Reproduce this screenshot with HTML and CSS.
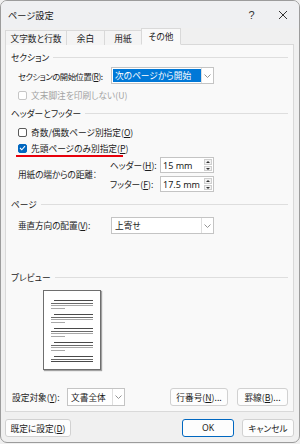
FILE: index.html
```html
<!DOCTYPE html>
<html>

<head>
    <meta charset="UTF-8">
    <title>ページ設定</title>
    <link rel="stylesheet" href="styles.css">
</head>

<body>

    <div class="window">
        <div class="titlebar">
            <span class="title">ページ設定</span>
            <span class="help">?</span>
            <span class="close">
                <svg width="10" height="10" viewBox="0 0 10 10"><path d="M1 1L9 9M9 1L1 9" stroke="#333" stroke-width="1"/></svg>
            </span>
        </div>

        <div class="tabs">
            <div class="tab t-chars">文字数と行数</div>
            <div class="tab t-margin">余白</div>
            <div class="tab t-paper">用紙</div>
            <div class="tab t-other active">その他</div>
        </div>

        <div class="panel">
            <div class="group-title g-section"><span>セクション</span></div>
            <div class="row r-start">
                <span class="lbl lbl-tight">セクションの開始位置(<u>R</u>):</span>
                <div class="select s-wide">
                    <span class="value"><span class="hl">次のページから開始</span></span>
                    <span class="arrow"><svg width="7" height="4" viewBox="0 0 7 4"><path d="M0.5 0.5L3.5 3.5L6.5 0.5" fill="none" stroke="#888" stroke-width="0.9"/></svg></span>
                </div>
            </div>
            <div class="check c-endnote disabled">
                <span class="box"></span>
                <span>文末脚注を印刷しない(U)</span>
            </div>

            <div class="group-title g-header"><span>ヘッダーとフッター</span></div>
            <div class="check c-oddeven">
                <span class="box"></span>
                <span>奇数/偶数ページ別指定(<u>O</u>)</span>
            </div>
            <div class="check c-first checked marked">
                <span class="box"><svg width="7" height="6" viewBox="0 0 7 6"><path d="M1 3L2.8 4.8L6 1.2" fill="none" stroke="#fff" stroke-width="1.1"/></svg></span>
                <span>先頭ページのみ別指定(<u>P</u>)</span>
            </div>

            <div class="distance">
                <span class="lbl d-lbl">用紙の端からの距離：</span>
                <span class="spin-lbl">ヘッダー(<u>H</u>):</span>
                <div class="spin">
                    <span class="value">15 mm</span>
                    <span class="spin-btns"><span class="up"></span><span class="down"></span></span>
                </div>
                <span class="spin-lbl">フッター(<u>F</u>):</span>
                <div class="spin">
                    <span class="value">17.5 mm</span>
                    <span class="spin-btns"><span class="up"></span><span class="down"></span></span>
                </div>
            </div>

            <div class="group-title g-page"><span>ページ</span></div>
            <div class="row r-valign">
                <span class="lbl">垂直方向の配置(<u>V</u>):</span>
                <div class="select s-wide">
                    <span class="value">上寄せ</span>
                    <span class="arrow"><svg width="7" height="4" viewBox="0 0 7 4"><path d="M0.5 0.5L3.5 3.5L6.5 0.5" fill="none" stroke="#888" stroke-width="0.9"/></svg></span>
                </div>
            </div>

            <div class="group-title g-preview"><span>プレビュー</span></div>
            <div class="preview-page">
                <svg width="56" height="78" viewBox="0 0 56 78">
                    <g shape-rendering="crispEdges">
                        <!-- 段落 1 -->
                        <rect x="10" y="9" width="39" height="1" fill="#4a4a4a"/>
                        <rect x="7" y="12" width="42" height="1" fill="#6a6a6a"/>
                        <rect x="7" y="14" width="42" height="1" fill="#a8a8a8"/>
                        <rect x="7" y="17" width="14" height="1" fill="#a8a8a8"/>
                        <!-- 段落 2 -->
                        <rect x="10" y="23" width="39" height="1" fill="#4a4a4a"/>
                        <rect x="7" y="26" width="42" height="1" fill="#6a6a6a"/>
                        <rect x="7" y="28" width="42" height="1" fill="#a8a8a8"/>
                        <rect x="7" y="31" width="14" height="1" fill="#a8a8a8"/>
                        <!-- 段落 3 -->
                        <rect x="10" y="37" width="39" height="1" fill="#4a4a4a"/>
                        <rect x="7" y="40" width="42" height="1" fill="#6a6a6a"/>
                        <rect x="7" y="42" width="42" height="1" fill="#a8a8a8"/>
                        <rect x="7" y="45" width="14" height="1" fill="#a8a8a8"/>
                        <!-- 段落 4 -->
                        <rect x="10" y="51" width="39" height="1" fill="#4a4a4a"/>
                        <rect x="7" y="54" width="42" height="1" fill="#6a6a6a"/>
                        <rect x="7" y="56" width="42" height="1" fill="#a8a8a8"/>
                        <rect x="7" y="59" width="14" height="1" fill="#a8a8a8"/>
                        <!-- 段落 5 -->
                        <rect x="10" y="65" width="39" height="1" fill="#4a4a4a"/>
                        <rect x="7" y="68" width="42" height="1" fill="#6a6a6a"/>
                        <rect x="7" y="70" width="42" height="1" fill="#4a4a4a"/>
                    </g>
                </svg>
            </div>

            <div class="bottom-row">
                <span class="apply-lbl">設定対象(<u>Y</u>):</span>
                <div class="select s-small">
                    <span class="value">文書全体</span>
                    <span class="arrow"><svg width="7" height="4" viewBox="0 0 7 4"><path d="M0.5 0.5L3.5 3.5L6.5 0.5" fill="none" stroke="#888" stroke-width="0.9"/></svg></span>
                </div>
                <span class="spacer"></span>
                <button class="btn b-lines">行番号(<u>N</u>)...</button>
                <button class="btn b-borders">罫線(<u>B</u>)...</button>
            </div>
        </div>

        <div class="footer">
            <button class="btn b-default">既定に設定(<u>D</u>)</button>
            <span class="spacer"></span>
            <button class="btn b-ok">OK</button>
            <button class="btn b-cancel">キャンセル</button>
        </div>
    </div>

</body>

</html>
```

FILE: styles.css
```css
/* ページ設定ダイアログ */

* {
    box-sizing: border-box;
}

html,
body {
    margin: 0;
    padding: 0;
}

body {
    width: 300px;
    height: 444px;
    overflow: hidden;
    background-color: #f0f0f0;
    font-family: "Noto Sans CJK JP", "Noto Sans", sans-serif;
    font-size: 8.7px;
    color: #1b1b1b;
    font-feature-settings: "palt";
}

u {
    text-underline-offset: 1px;
}

/* ウィンドウ枠 */
.window {
    width: 300px;
    height: 443px;
    border: 1px solid #9c9c9c;
    border-radius: 7px;
    background-color: #f0f0f0;
    display: flex;
    flex-direction: column;
    overflow: hidden;
}

/* タイトルバー */
.titlebar {
    height: 27px;
    flex: none;
    display: flex;
    align-items: center;
    padding-left: 7px;
    background-color: #eff0f2;
}

.title {
    flex: 1;
    font-size: 9.2px;
}

.help {
    width: 31px;
    text-align: center;
    font-family: "Liberation Sans", sans-serif;
    font-size: 11px;
    color: #333;
}

.close {
    width: 32px;
    display: flex;
    justify-content: center;
    align-items: center;
}

/* タブ */
.tabs {
    height: 17px;
    flex: none;
    display: flex;
    align-items: flex-end;
    padding-left: 4px;
    margin-bottom: -1px;
    position: relative;
    z-index: 1;
}

.tab {
    height: 15px;
    display: flex;
    align-items: center;
    justify-content: center;
    border: 1px solid #d9d9d9;
    border-bottom: none;
    margin-right: -1px;
    background-color: #f4f4f4;
}

.t-chars {
    width: 62px;
}

.t-margin {
    width: 39px;
}

.t-paper {
    width: 38px;
}

.t-other {
    width: 40px;
}

.tab.active {
    height: 17px;
    background-color: #f9f9f9;
    border-bottom: 1px solid #f9f9f9;
}

/* タブの中身 */
.panel {
    height: 368px;
    flex: none;
    margin: 0 5px 0 4px;
    padding: 0 5px;
    border: 1px solid #d9d9d9;
    background-color: #f9f9f9;
    display: flex;
    flex-direction: column;
}

.group-title {
    height: 12px;
    display: flex;
    align-items: center;
}

.group-title::after {
    content: "";
    flex: 1;
    height: 1px;
    margin-left: 4px;
    background-color: #dedede;
}

.g-section {
    margin-top: 6px;
}

.g-header {
    margin-top: 6px;
}

.g-page {
    margin-top: 6px;
}

.g-preview {
    margin-top: 37px;
}

.row {
    height: 17px;
    display: flex;
    align-items: center;
    padding-left: 7px;
}

.r-start {
    margin-top: 4px;
}

.r-valign {
    margin-top: 7px;
}

.lbl {
    width: 93px;
    flex: none;
    white-space: nowrap;
    letter-spacing: -0.15px;
}

.lbl-tight {
    font-size: 8.3px;
    letter-spacing: -0.45px;
}

/* ドロップダウン */
.select {
    height: 17px;
    display: flex;
    border: 1px solid #c4c4c4;
    background-color: #fff;
}

.s-wide {
    width: 103px;
}

.s-small {
    width: 58px;
}

.select .value {
    flex: 1;
    display: flex;
    align-items: center;
    padding-left: 3px;
    white-space: nowrap;
    overflow: hidden;
}

.hl {
    display: flex;
    align-items: center;
    height: 13px;
    width: 88px;
    margin-left: -2px;
    padding-left: 2px;
    background-color: #0078d7;
    color: #fff;
}

.select .arrow {
    width: 12px;
    flex: none;
    display: flex;
    align-items: center;
    justify-content: center;
    border-left: 1px solid #dedede;
}

/* チェックボックス */
.check {
    height: 12px;
    display: flex;
    align-items: center;
    gap: 4px;
    padding-left: 7px;
    position: relative;
}

.c-endnote {
    margin-top: 5px;
}

.c-oddeven {
    margin-top: 7px;
}

.c-first {
    margin-top: 4px;
}

.check .box {
    width: 9px;
    height: 9px;
    flex: none;
    border: 1px solid #5a5a5a;
    border-radius: 2px;
    background-color: #fff;
    display: flex;
    align-items: center;
    justify-content: center;
}

.check.disabled {
    color: #a3a3a3;
}

.check.disabled .box {
    border-color: #c6c6c6;
}

.check.checked .box {
    border-color: #0067c0;
    background-color: #0067c0;
}

/* 赤い下線 (注釈) */
.check.marked::after {
    content: "";
    position: absolute;
    left: 5px;
    top: 13px;
    width: 107px;
    height: 2px;
    background-color: #e8000b;
}

/* 用紙の端からの距離 */
.distance {
    margin-top: 3px;
    padding-left: 7px;
    display: grid;
    grid-template-columns: 92px 47px 54px;
    grid-template-rows: 16px 16px;
    row-gap: 3px;
    column-gap: 0;
    align-items: center;
}

.d-lbl {
    grid-row: 1 / 3;
    width: auto;
}

.spin-lbl {
    text-align: right;
    padding-right: 5px;
    white-space: nowrap;
}

.spin {
    height: 16px;
    display: flex;
    border: 1px solid #c4c4c4;
    background-color: #fff;
    margin-left: 3px;
    width: 54px;
}

.spin .value {
    flex: 1;
    display: flex;
    align-items: center;
    padding-left: 2px;
    font-family: "Noto Sans", sans-serif;
    font-size: 9px;
}

.spin-btns {
    width: 10px;
    flex: none;
    display: flex;
    flex-direction: column;
    gap: 1px;
    padding: 1px;
}

.spin-btns span {
    flex: 1;
    border: 1px solid #cfcfcf;
    background-color: #f2f2f2;
    position: relative;
}

.spin-btns .up::after,
.spin-btns .down::after {
    content: "";
    position: absolute;
    left: 1px;
    width: 0;
    height: 0;
    border-left: 2px solid transparent;
    border-right: 2px solid transparent;
}

.spin-btns .up::after {
    top: 1px;
    border-bottom: 2px solid #333;
}

.spin-btns .down::after {
    top: 1px;
    border-top: 2px solid #333;
}

/* プレビュー */
.preview-page {
    width: 58px;
    height: 80px;
    margin-top: 7px;
    margin-left: 32px;
    border: 1px solid #6e6e6e;
    background-color: #fff;
    box-shadow: 1px 1px 1px rgba(0, 0, 0, 0.35);
}

.preview-page svg {
    display: block;
}

/* 下の行 */
.bottom-row {
    height: 18px;
    margin-top: 18px;
    display: flex;
    align-items: center;
    padding-left: 1px;
}

.apply-lbl {
    width: 55px;
    flex: none;
    white-space: nowrap;
}

.bottom-row .select {
    height: 18px;
}

.spacer {
    flex: 1;
}

/* ボタン */
.btn {
    height: 18px;
    padding: 0;
    border: 1px solid #d1d1d1;
    border-radius: 3px;
    background-color: #fdfdfd;
    font-family: inherit;
    font-size: 8.7px;
    color: #1b1b1b;
    font-feature-settings: "palt";
    white-space: nowrap;
}

.b-lines {
    width: 58px;
    margin-right: 9px;
}

.b-borders {
    width: 51px;
}

.footer {
    height: 31px;
    display: flex;
    align-items: flex-start;
    padding: 7px 5px 0 4px;
}

.b-default {
    width: 66px;
}

.b-ok {
    width: 52px;
    margin-right: 8px;
    border-color: #0067c0;
    font-family: "Noto Sans", sans-serif;
}

.b-cancel {
    width: 52px;
}
```
